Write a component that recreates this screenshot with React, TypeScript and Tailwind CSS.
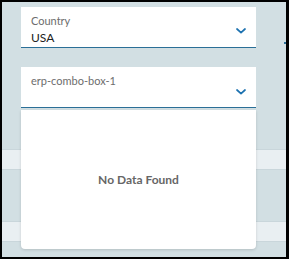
type ComboProps = {
  label: string;
  value?: string;
};

function Chevron() {
  return (
    <svg width="10" height="6" viewBox="0 0 10 6" className="shrink-0 text-[#1d72b0]">
      <path d="M1 1l4 3.6L9 1" fill="none" stroke="currentColor" strokeWidth="1.7" strokeLinecap="round" strokeLinejoin="round" />
    </svg>
  );
}

function Combo({ label, value }: ComboProps) {
  return (
    <div className="flex h-[41px] w-[235px] items-start justify-between border-b border-[#2b6f97] bg-white pl-[10px] pr-[10px] pt-[7px]">
      <div className="flex flex-col">
        <span className="text-[11px] leading-[14px] text-[#6d6d6d]">{label}</span>
        {value && <span className="mt-[2px] text-[12px] leading-[15px] text-[#222]">{value}</span>}
      </div>
      <div className={value ? "pt-[14px]" : "pt-[15px]"}>
        <Chevron />
      </div>
    </div>
  );
}

export default function App() {
  return (
    <div className="h-[259px] w-[289px] border-y-2 border-l-2 border-r-[3px] border-black font-['Lato',sans-serif]">
      <div className="relative h-full w-full overflow-hidden bg-[#d2dfe3]">
        {/* form fields */}
        <div className="flex flex-col gap-[19px] pl-[19px] pt-[5px]">
          <Combo label="Country" value="USA" />
          <Combo label="erp-combo-box-1" />
        </div>

        {/* table rows behind the menu */}
        <div className="mt-[41px] h-[21px] border-y border-[#c9d6db] bg-[#e9eff2]" />
        <div className="mt-[51px] h-[21px] border-y border-[#c9d6db] bg-[#e9eff2]" />

        {/* blue tick at the right edge */}
        <div className="absolute right-0 top-[40px] h-[2px] w-[2px] bg-[#2b6f97]" />

        {/* dropdown menu */}
        <div className="absolute left-[19px] top-[108px] flex h-[139px] w-[235px] items-center justify-center rounded-b-[4px] bg-white shadow-[0_1px_3px_rgba(0,0,0,0.15)]">
          <span className="text-[12px] font-bold text-[#666]">No Data Found</span>
        </div>
      </div>
    </div>
  );
}
